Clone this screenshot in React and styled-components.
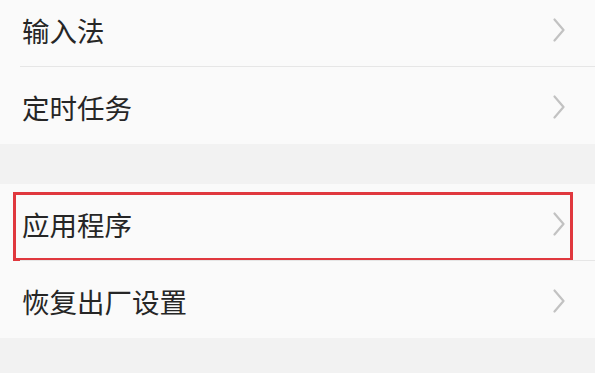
import React from 'react';
import styled, { createGlobalStyle } from 'styled-components';

const GlobalStyle = createGlobalStyle`
  html, body {
    margin: 0;
    padding: 0;
    background: #f2f2f2;
  }
  body {
    font-family: "Noto Sans CJK SC", "Noto Sans", sans-serif;
    overflow: hidden;
  }
`;

const sections = [
  [{ label: '输入法' }, { label: '定时任务' }],
  [{ label: '应用程序', highlighted: true }, { label: '恢复出厂设置' }],
];

function Chevron() {
  return (
    <svg width="12" height="24" viewBox="0 0 12 24" fill="none">
      <path d="M1.5 1.5 L10.5 12 L1.5 22.5" stroke="#c2c2c2" strokeWidth="2.2" strokeLinecap="round" strokeLinejoin="round" />
    </svg>
  );
}

export default function App() {
  return (
    <Page>
      <GlobalStyle />
      {sections.map((rows, i) => (
        <Section key={i} first={i === 0}>
          {rows.map((row) => (
            <Row key={row.label}>
              <Label>{row.label}</Label>
              <Arrow>
                <Chevron />
              </Arrow>
              {row.highlighted && <Highlight />}
            </Row>
          ))}
        </Section>
      ))}
    </Page>
  );
}

const Page = styled.div`
  width: 595px;
  height: 373px;
  background: #f2f2f2;
  display: flex;
  flex-direction: column;
  gap: 40px;
  overflow: hidden;
`;

const Section = styled.div`
  background: #fafafa;
  display: flex;
  flex-direction: column;
  margin-top: ${(p) => (p.first ? '-10px' : '0')};
`;

const Row = styled.div`
  position: relative;
  height: 77px;
  display: flex;
  align-items: center;
  justify-content: space-between;
  padding: 2px 30px 0 22px;
  box-sizing: border-box;

  & + &::before {
    content: '';
    position: absolute;
    top: -1px;
    left: 20px;
    right: 0;
    height: 1px;
    background: #e6e6e6;
  }
`;

const Label = styled.span`
  font-size: 27.5px;
  color: #262626;
  font-weight: 400;
`;

const Arrow = styled.span`
  display: flex;
  align-items: center;
`;

const Highlight = styled.div`
  position: absolute;
  top: 8px;
  left: 13px;
  right: 22px;
  bottom: 0;
  border: 3px solid #e0383e;
  pointer-events: none;
`;
